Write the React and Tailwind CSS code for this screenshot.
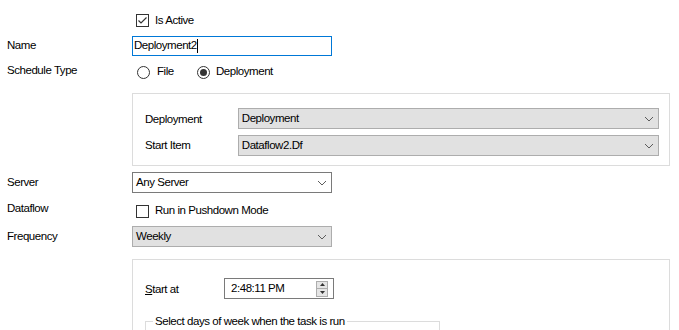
import React from "react";

const font = { fontFamily: '"Liberation Sans", Arial, sans-serif' };

function Chevron() {
  return (
    <svg width="10" height="6" viewBox="0 0 10 6" className="shrink-0">
      <path d="M1 1 L5 5 L9 1" fill="none" stroke="#5c5c5c" strokeWidth="1" />
    </svg>
  );
}

function Checkbox({ checked }) {
  return (
    <div className="w-[13px] h-[13px] border border-[#333333] bg-white flex items-center justify-center shrink-0">
      {checked && (
        <svg width="11" height="11" viewBox="0 0 11 11">
          <path d="M1.5 5.5 L4 8 L9.5 2.5" fill="none" stroke="#333333" strokeWidth="1.2" />
        </svg>
      )}
    </div>
  );
}

function Radio({ checked }) {
  return (
    <div className="w-[13px] h-[13px] rounded-full border border-[#333333] bg-white flex items-center justify-center shrink-0">
      {checked && <div className="w-[7px] h-[7px] rounded-full bg-[#333333]" />}
    </div>
  );
}

function Combo({ text, gray, width }) {
  return (
    <div
      className={`h-[21px] flex items-center justify-between pl-[3px] pr-[4px] border ${
        gray ? "bg-[#e1e1e1] border-[#adadad]" : "bg-white border-[#7a7a7a]"
      }`}
      style={{ width }}
    >
      <span className="leading-none">{text}</span>
      <Chevron />
    </div>
  );
}

export default function App() {
  return (
    <div
      className="w-[679px] h-[330px] bg-white text-black text-[11.5px] tracking-[-0.45px] overflow-hidden flex flex-col pt-[14px]"
      style={font}
    >
      {/* Is Active */}
      <div className="h-[13px] flex items-center pl-[136px] gap-[6px]">
        <Checkbox checked />
        <span className="leading-none">Is Active</span>
      </div>

      {/* Name */}
      <div className="mt-[9px] h-[20px] flex items-center">
        <div className="w-[132px] pl-[7px]">Name</div>
        <div className="w-[200px] h-[20px] border border-[#0078d7] flex items-center pl-[1px]">
          <span className="leading-none">Deployment2</span>
          <span className="w-[1px] h-[14px] bg-black" />
        </div>
      </div>

      {/* Schedule Type */}
      <div className="mt-[6px] h-[20px] flex items-center">
        <div className="w-[137px] pl-[7px] -mt-[3px]">Schedule Type</div>
        <Radio />
        <span className="ml-[7px] w-[40px]">File</span>
        <Radio checked />
        <span className="ml-[6px]">Deployment</span>
      </div>

      {/* Deployment panel */}
      <div className="mt-[11px] ml-[132px] w-[538px] h-[73px] border border-[#dcdcdc] pt-[14px] pl-[12px] pr-[10px] flex flex-col gap-[6px]">
        <div className="flex items-center h-[21px]">
          <div className="w-[93px] mt-[3px]">Deployment</div>
          <Combo text="Deployment" gray width={422} />
        </div>
        <div className="flex items-center h-[21px]">
          <div className="w-[93px]">Start Item</div>
          <Combo text="Dataflow2.Df" gray width={422} />
        </div>
      </div>

      {/* Server */}
      <div className="mt-[6px] h-[21px] flex items-center">
        <div className="w-[132px] pl-[7px]">Server</div>
        <Combo text="Any Server" width={200} />
      </div>

      {/* Dataflow */}
      <div className="mt-[8px] h-[21px] flex items-center">
        <div className="w-[136px] pl-[7px] -mt-[5px]">Dataflow</div>
        <Checkbox />
        <span className="ml-[6px] -mt-[2px]">Run in Pushdown Mode</span>
      </div>

      {/* Frequency */}
      <div className="mt-[4px] h-[21px] flex items-center">
        <div className="w-[132px] pl-[7px]">Frequency</div>
        <Combo text="Weekly" gray width={200} />
      </div>

      {/* Weekly panel */}
      <div className="mt-[12px] ml-[132px] w-[538px] flex-1 border-t border-l border-r border-[#dcdcdc] pt-[18px] pl-[12px] flex flex-col">
        <div className="flex items-center h-[21px]">
          <div className="w-[79px] mt-[2px]">
            <span className="underline">S</span>tart at
          </div>
          <div className="w-[110px] h-[21px] border border-[#7a7a7a] flex items-center justify-between pl-[6px] pr-[5px]">
            <span className="leading-none">2:48:11 PM</span>
            <div className="w-[12px] h-[16px] flex flex-col border border-[#adadad] bg-[#e5e5e5]">
              <div className="flex-1 flex items-center justify-center border-b border-[#adadad]">
                <svg width="5" height="3" viewBox="0 0 5 3">
                  <path d="M0 3 L2.5 0 L5 3 Z" fill="#333" />
                </svg>
              </div>
              <div className="flex-1 flex items-center justify-center">
                <svg width="5" height="3" viewBox="0 0 5 3">
                  <path d="M0 0 L2.5 3 L5 0 Z" fill="#333" />
                </svg>
              </div>
            </div>
          </div>
        </div>
        <div className="relative mt-[22px] w-[295px] flex-1 border-t border-l border-r border-[#dcdcdc]">
          <span className="absolute -top-[9px] left-[7px] bg-white px-[2px] leading-[16px]">
            Select days of week when the task is run
          </span>
        </div>
      </div>
    </div>
  );
}
